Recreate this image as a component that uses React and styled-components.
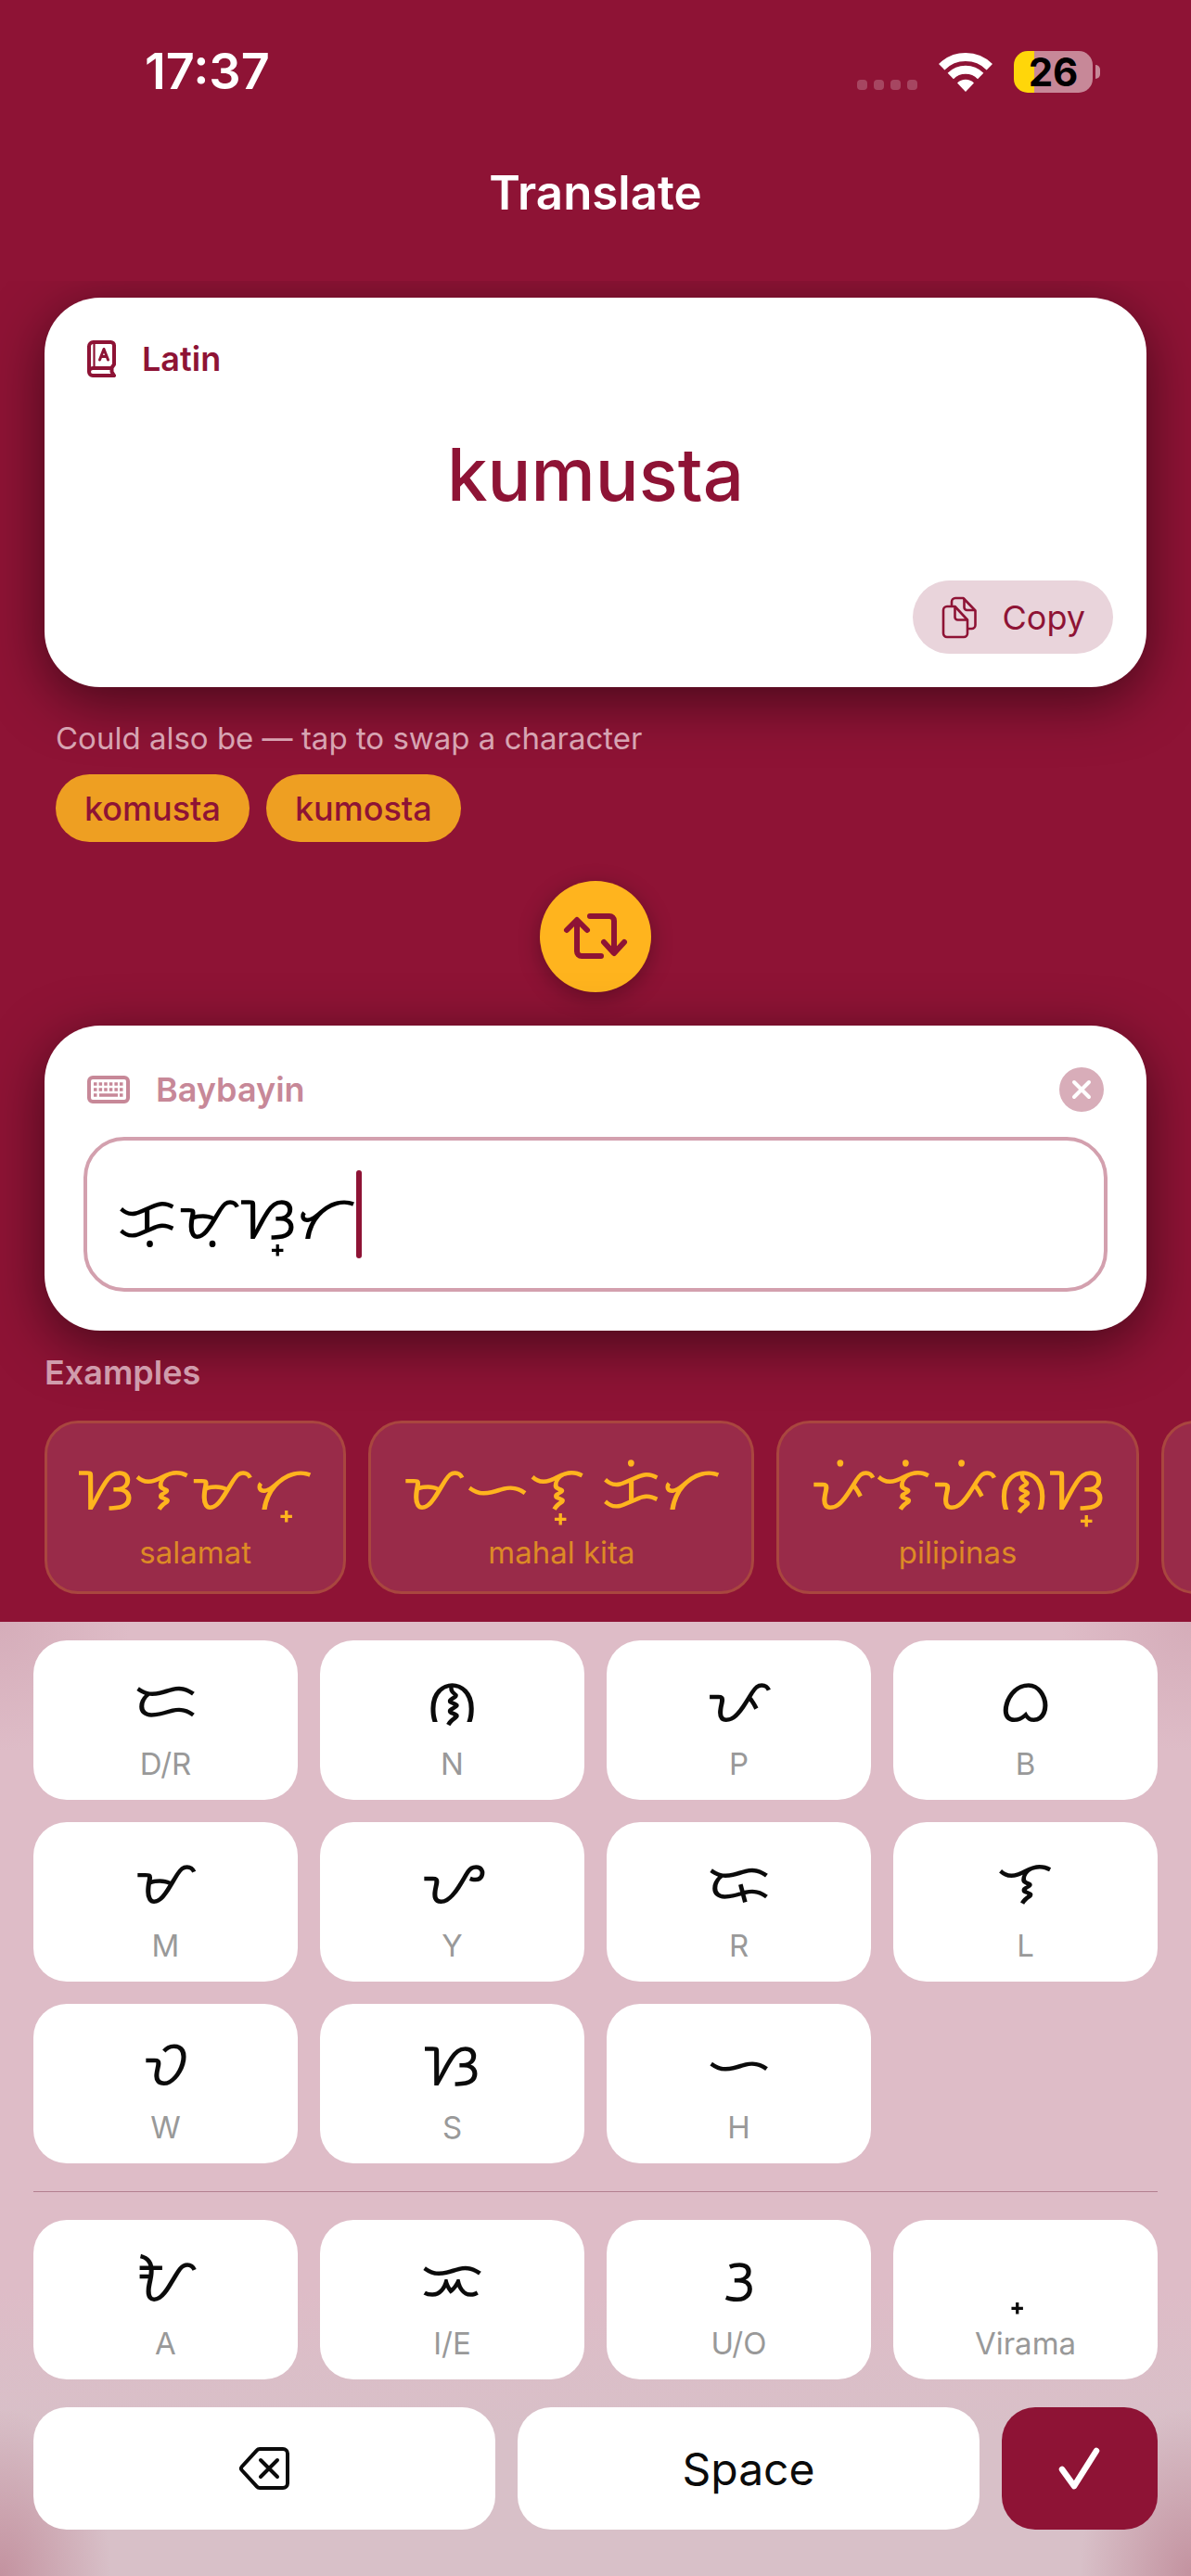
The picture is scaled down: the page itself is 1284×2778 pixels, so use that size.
import React from "react";
import styled, { createGlobalStyle } from "styled-components";

const maroon = "#8e1335";
const sans = `Inter, Roboto, "Liberation Sans", sans-serif`;
const script = `"Noto Sans Tagalog", "Noto Sans", "DejaVu Sans", sans-serif`;

const GlobalStyle = createGlobalStyle`
  *, *::before, *::after { box-sizing: border-box; }
  body { margin: 0; background: ${maroon}; font-family: ${sans}; }
  button, input { font: inherit; color: inherit; margin: 0; padding: 0; border: 0; background: none; }
  h1, h2, p { margin: 0; font-weight: inherit; }
`;

const Screen = styled.div`
  display: flex;
  flex-direction: column;
  min-height: 100vh;
  background: ${maroon};
`;

const StatusBar = styled.header`
  display: flex;
  align-items: center;
  justify-content: space-between;
  padding: 44px 98px 0 156px;
  color: #fff;
`;

const Time = styled.time`
  font-size: 54px;
  font-weight: 600;
  line-height: 66px;
`;

const StatusIcons = styled.div`
  display: flex;
  align-items: center;
  gap: 23px;
`;

const Signal = styled.div`
  display: flex;
  align-self: flex-end;
  gap: 7px;
  padding-bottom: 3px;
`;

const Dot = styled.span`
  width: 11px;
  height: 11px;
  border-radius: 4px;
  background: rgba(255, 255, 255, 0.22);
`;

const BatteryWrap = styled.div`
  display: flex;
  align-items: center;
  gap: 3px;
`;

const Battery = styled.div`
  width: 85px;
  line-height: 45px;
  border-radius: 15px;
  background: linear-gradient(to right, #ffd60a 26%, #c78898 26%);
  color: #000;
  font-size: 42px;
  font-weight: 700;
  text-align: center;
`;

const BatteryCap = styled.span`
  width: 5px;
  height: 15px;
  border-radius: 0 5px 5px 0;
  background: #c78898;
`;

const Title = styled.h1`
  padding: 65px 0 62px;
  color: #fff;
  font-size: 51px;
  font-weight: 600;
  line-height: 66px;
  text-align: center;
`;

const Content = styled.main`
  display: flex;
  flex: 1;
  flex-direction: column;
  overflow: hidden;
  padding: 18px 48px 30px;
`;

const Card = styled.section`
  display: flex;
  flex-direction: column;
  padding: ${(p) => p.$padding};
  border-radius: 60px;
  background: #fff;
  box-shadow: 0 15px 60px rgba(0, 0, 0, 0.5);
`;

const CardHeader = styled.div`
  display: flex;
  align-items: center;
  gap: 28px;
  height: 48px;
  padding: 0 ${(p) => p.$inset}px;
  color: ${(p) => p.$color};
  font-size: 36px;
  font-weight: 600;
`;

const Output = styled.p`
  padding: 50px 0 63px;
  color: ${maroon};
  font-size: 78px;
  font-weight: 500;
  line-height: 102px;
  text-align: center;
`;

const CopyButton = styled.button`
  display: flex;
  align-items: center;
  align-self: flex-end;
  gap: 28px;
  height: 79px;
  padding: 0 30px 0 31px;
  border-radius: 40px;
  background: #e9d4db;
  color: ${maroon};
  font-size: 36px;
`;

const Suggestions = styled.section`
  padding: 35px 12px 0;
`;

const Hint = styled.h2`
  color: #d7a4b2;
  font-size: 33px;
  line-height: 40px;
`;

const Chips = styled.div`
  display: flex;
  gap: 18px;
  padding-top: 19px;
`;

const Chip = styled.button`
  height: 73px;
  padding: 0 31px;
  border-radius: 37px;
  background: #ee9f22;
  color: ${maroon};
  font-size: 36px;
  font-weight: 500;
`;

const SwapButton = styled.button`
  display: grid;
  place-items: center;
  align-self: center;
  width: 120px;
  height: 120px;
  margin: 42px 0 36px;
  border-radius: 50%;
  background: #ffb41e;
  color: ${maroon};
  box-shadow: 0 6px 24px rgba(0, 0, 0, 0.3);
`;

const ClearButton = styled.button`
  display: grid;
  place-items: center;
  width: 48px;
  height: 48px;
  margin-left: auto;
  border-radius: 50%;
  background: #d8adb9;
  color: #fff;
`;

const Field = styled.label`
  display: flex;
  align-items: center;
  height: 167px;
  margin-top: 27px;
  padding: 0 32px;
  border: 4px solid #d3a0ae;
  border-radius: 44px;
`;

const FieldInput = styled.input`
  field-sizing: content;
  max-width: 100%;
  outline: 0;
  color: #000;
  font-family: ${script};
  font-size: 66px;
`;

const Caret = styled.span`
  width: 6px;
  height: 95px;
  border-radius: 3px;
  background: ${maroon};
`;

const ExamplesTitle = styled.h2`
  padding: 23px 0 30px;
  color: #d09cac;
  font-size: 36px;
  font-weight: 600;
  line-height: 44px;
`;

const ExampleRow = styled.div`
  display: flex;
  gap: 24px;
`;

const Example = styled.button`
  display: flex;
  flex: none;
  flex-direction: column;
  align-items: center;
  justify-content: center;
  gap: 10px;
  height: 187px;
  padding: 2px 33px 0;
  border: 3px solid #a9463f;
  border-radius: 36px;
  background: #992b49;
  color: #dd8a26;
  font-size: 33px;
  line-height: 40px;
`;

const ExampleScript = styled.span`
  color: #ffb41e;
  font-family: ${script};
  font-size: 66px;
  line-height: 84px;
  white-space: nowrap;
`;

const Keyboard = styled.section`
  display: flex;
  flex-direction: column;
  gap: 30px;
  padding: 20px 36px 50px;
  background:
    radial-gradient(120px 180px at 0 100%, rgba(170, 90, 110, 0.45), transparent),
    radial-gradient(120px 180px at 100% 100%, rgba(170, 90, 110, 0.45), transparent),
    radial-gradient(circle at 0 0, rgba(200, 150, 165, 0.4), transparent 140px),
    radial-gradient(circle at 100% 0, rgba(200, 150, 165, 0.4), transparent 140px),
    linear-gradient(#debcc7 70%, #d8c0c8 85%);
`;

const KeyGrid = styled.div`
  display: grid;
  grid-template-columns: repeat(4, 1fr);
  gap: 24px;
`;

const Key = styled.button`
  display: flex;
  flex-direction: column;
  align-items: center;
  justify-content: center;
  gap: 8px;
  height: 172px;
  border-radius: 36px;
  background: #fff;
  color: #999;
  font-size: 33px;
  line-height: 40px;
`;

const KeyScript = styled.span`
  color: #0b0b0b;
  font-family: ${script};
  font-size: 66px;
  line-height: 86px;
`;

const Divider = styled.hr`
  width: 100%;
  height: 1px;
  margin: 0;
  border: 0;
  background: #b37f90;
`;

const ActionRow = styled.div`
  display: grid;
  grid-template-columns: 1fr 1fr 168px;
  gap: 24px;
`;

const ActionKey = styled.button`
  display: grid;
  place-items: center;
  height: 132px;
  border-radius: 36px;
  background: ${(p) => (p.$primary ? maroon : "#fff")};
  color: ${(p) => (p.$primary ? "#fff" : "#0b0b0b")};
  font-size: 48px;
`;

const WifiIcon = () => (
  <svg width="58" height="43" viewBox="0 0 58 43" fill="none" stroke="#fff" aria-hidden="true">
    <path d="M3.2 16.2a36.5 36.5 0 0 1 51.6 0" strokeWidth="9" />
    <path d="M12.8 26a23 23 0 0 1 32.4 0" strokeWidth="9" />
    <path d="M29 43l-9-9.500a12.800 12.800 0 0 1 18 0z" fill="#fff" stroke="none" />
  </svg>
);

const BookIcon = () => (
  <svg width="31" height="40" viewBox="0 0 31 40" fill="none" stroke="currentColor" aria-hidden="true">
    <path d="M2 34V6.500A4.500 4.500 0 0 1 6.500 2H25.500A3.500 3.500 0 0 1 29 5.500V26L26.500 29.500V34L29 38H6A4 4 0 0 1 6 30H28" strokeWidth="4" strokeLinejoin="round" />
    <path d="M7.500 3v26" strokeWidth="2.200" />
    <path d="M13.500 21l4.500-11.500 4.500 11.500M15 17.500h6" strokeWidth="3" strokeLinecap="round" strokeLinejoin="round" />
  </svg>
);

const CopyIcon = () => (
  <svg width="38" height="46" viewBox="0 0 38 46" fill="none" stroke="currentColor" strokeWidth="2.600" strokeLinejoin="round" aria-hidden="true">
    <path d="M6 11H14.500L28 25.500V40A4 4 0 0 1 24 44H6A4 4 0 0 1 2 40V15A4 4 0 0 1 6 11Z" />
    <path d="M14.500 11V22.500A3 3 0 0 0 17.500 25.500H28" />
    <path d="M11 11V6A4 4 0 0 1 15 2H23.500L36.500 15.500V31A4 4 0 0 1 32.500 35H28.500" />
    <path d="M24.500 2.500V12A3 3 0 0 0 27.500 15H36" />
  </svg>
);

const SwapIcon = () => (
  <svg width="74" height="56" viewBox="0 0 74 56" fill="none" stroke="currentColor" strokeWidth="6" strokeLinecap="round" strokeLinejoin="round" aria-hidden="true">
    <path d="M17 12V44A5 5 0 0 0 22 49H43" />
    <path d="M6 21L17 10L28 21" />
    <path d="M31 6H52A5 5 0 0 1 57 11V44" />
    <path d="M46 34L57 46L68 34" />
  </svg>
);

const KeyboardIcon = () => (
  <svg width="46" height="30" viewBox="0 0 46 30" fill="none" stroke="currentColor" aria-hidden="true">
    <rect x="2" y="2" width="42" height="26" rx="4" strokeWidth="4" />
    <path d="M7 9H40M7 15H40" strokeWidth="3.400" strokeDasharray="3.500 2.100" />
    <path d="M7 21H10.500M13 21H33M35 21H38.500" strokeWidth="3.400" />
  </svg>
);

const CrossIcon = () => (
  <svg width="22" height="22" viewBox="0 0 22 22" stroke="currentColor" strokeWidth="4" strokeLinecap="round" aria-hidden="true">
    <path d="M3 3L19 19M19 3L3 19" />
  </svg>
);

const BackspaceIcon = () => (
  <svg width="56" height="48" viewBox="0 0 56 48" fill="none" stroke="currentColor" strokeWidth="4" strokeLinecap="round" strokeLinejoin="round" aria-hidden="true">
    <path d="M23 3H48A5 5 0 0 1 53 8V40A5 5 0 0 1 48 45H23A4 4 0 0 1 20 43.600L3.800 26A3 3 0 0 1 3.800 22L20 4.400A4 4 0 0 1 23 3Z" />
    <path d="M24 15L42 33M42 15L24 33" />
  </svg>
);

const CheckIcon = () => (
  <svg width="48" height="46" viewBox="0 0 48 46" fill="none" stroke="currentColor" strokeWidth="6.500" strokeLinecap="round" strokeLinejoin="round" aria-hidden="true">
    <path d="M5 24L18 42L42 4" />
  </svg>
);

const examples = [
  ["ᜐᜎᜋᜆ᜔", "salamat"],
  ["ᜋᜑᜎ᜔ ᜃᜒᜆ", "mahal kita"],
  ["ᜉᜒᜎᜒᜉᜒᜈᜐ᜔", "pilipinas"],
  ["ᜊᜑᜌ᜔", "bahay"],
];

const consonants = [
  ["ᜇ", "D/R"], ["ᜈ", "N"], ["ᜉ", "P"], ["ᜊ", "B"],
  ["ᜋ", "M"], ["ᜌ", "Y"], ["\u170D", "R"], ["ᜎ", "L"],
  ["ᜏ", "W"], ["ᜐ", "S"], ["ᜑ", "H"],
];

const vowels = [["ᜀ", "A"], ["ᜁ", "I/E"], ["ᜂ", "U/O"], ["\u00A0\u1714", "Virama"]];

const Keys = ({ items }) => (
  <KeyGrid>
    {items.map(([glyph, label]) => (
      <Key key={label} type="button">
        <KeyScript lang="tl-Tglg">{glyph}</KeyScript>
        {label}
      </Key>
    ))}
  </KeyGrid>
);

export default function App() {
  return (
    <Screen>
      <GlobalStyle />
      <StatusBar>
        <Time>17:37</Time>
        <StatusIcons>
          <Signal><Dot /><Dot /><Dot /><Dot /></Signal>
          <WifiIcon />
          <BatteryWrap><Battery>26</Battery><BatteryCap /></BatteryWrap>
        </StatusIcons>
      </StatusBar>
      <Title>Translate</Title>

      <Content>
        <Card $padding="42px 36px 36px">
          <CardHeader $inset={10} $color={maroon}><BookIcon />Latin</CardHeader>
          <Output>kumusta</Output>
          <CopyButton type="button"><CopyIcon />Copy</CopyButton>
        </Card>

        <Suggestions>
          <Hint>Could also be — tap to swap a character</Hint>
          <Chips>
            <Chip type="button">komusta</Chip>
            <Chip type="button">kumosta</Chip>
          </Chips>
        </Suggestions>

        <SwapButton type="button" aria-label="Swap direction"><SwapIcon /></SwapButton>

        <Card $padding="45px 42px 42px">
          <CardHeader $inset={4} $color="#c78898">
            <KeyboardIcon />
            <span id="source-label">Baybayin</span>
            <ClearButton type="button" aria-label="Clear"><CrossIcon /></ClearButton>
          </CardHeader>
          <Field>
            <FieldInput aria-labelledby="source-label" lang="tl-Tglg" defaultValue="ᜃᜓᜋᜓᜐ᜔ᜆ" />
            <Caret />
          </Field>
        </Card>

        <ExamplesTitle>Examples</ExamplesTitle>
        <ExampleRow>
          {examples.map(([glyphs, label]) => (
            <Example key={label} type="button">
              <ExampleScript lang="tl-Tglg">{glyphs}</ExampleScript>
              {label}
            </Example>
          ))}
        </ExampleRow>
      </Content>

      <Keyboard aria-label="Baybayin keyboard">
        <Keys items={consonants} />
        <Divider />
        <Keys items={vowels} />
        <ActionRow>
          <ActionKey type="button" aria-label="Backspace"><BackspaceIcon /></ActionKey>
          <ActionKey type="button">Space</ActionKey>
          <ActionKey type="button" $primary aria-label="Done"><CheckIcon /></ActionKey>
        </ActionRow>
      </Keyboard>
    </Screen>
  );
}
